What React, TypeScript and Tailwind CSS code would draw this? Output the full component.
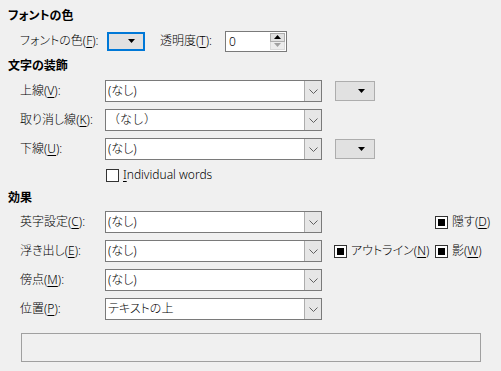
const font =
  "[font-family:'Noto_Sans','Noto_Sans_CJK_JP',sans-serif] [font-feature-settings:'palt']";

const Mn = ({ pre, k, post = "):" }: { pre: string; k: string; post?: string }) => (
  <span className="whitespace-nowrap">
    {pre}(<span className="underline underline-offset-2">{k}</span>
    {post}
  </span>
);

const Heading = ({ children, className = "" }: { children: string; className?: string }) => (
  <div className={`h-[16px] leading-[16px] font-bold ${className}`}>{children}</div>
);

const Chevron = () => (
  <svg width="9" height="5" viewBox="0 0 9 5" fill="none">
    <path d="M0.5 0.5 L4.5 4.5 L8.5 0.5" stroke="#606060" strokeWidth="1" />
  </svg>
);

const Arrow = ({ color = "#000" }: { color?: string }) => (
  <svg width="7" height="4" viewBox="0 0 7 4">
    <path d="M0 0 H7 L3.5 4 Z" fill={color} />
  </svg>
);

const Combo = ({ value, wide }: { value: string; wide?: boolean }) => (
  <div className="flex h-[22px] w-[217px] shrink-0 border border-[#7a7a7a] bg-white">
    <span
      className={`flex-1 truncate pl-[2px] leading-[20px] ${wide ? "[font-feature-settings:normal]" : ""}`}
    >
      {value}
    </span>
    <span className="flex w-[17px] items-center justify-center border-l border-[#adadad] bg-[#e6e6e6]">
      <Chevron />
    </span>
  </div>
);

const ColorBtn = () => (
  <div className="flex h-[20px] w-[40px] items-center justify-end border border-[#adadad] bg-[#e1e1e1] pr-[9px]">
    <Arrow />
  </div>
);

const Check = ({ checked }: { checked?: boolean }) => (
  <span className="flex h-[13px] w-[13px] shrink-0 items-center justify-center border border-[#333] bg-white">
    {checked ? <span className="h-[7px] w-[7px] bg-black" /> : null}
  </span>
);

const Row = ({ label, children }: { label: React.ReactNode; children: React.ReactNode }) => (
  <div className="flex h-[22px] items-center">
    <div className="w-[97px] shrink-0 pl-[12px]">{label}</div>
    {children}
  </div>
);

export default function App() {
  return (
    <div
      className={`h-[371px] w-[501px] overflow-hidden bg-[#f0f0f0] pl-[8px] pt-[8px] text-[12px] font-light text-black ${font}`}
    >
      <Heading>フォントの色</Heading>

      <div className="mt-[6px] flex h-[22px] items-center">
        <div className="w-[99px] shrink-0 pl-[12px]">
          <Mn pre="フォントの色" k="F" />
        </div>
        <div className="flex h-[19px] w-[38px] shrink-0 items-center justify-end border-2 border-[#0078d7] bg-[#e1e1e1] pr-[8px]">
          <Arrow />
        </div>
        <div className="w-[80px] shrink-0 pl-[15px]">
          <Mn pre="透明度" k="T" />
        </div>
        <div className="flex h-[21px] w-[62px] border border-[#7a7a7a] bg-white">
          <span className="flex-1 pl-[3px] leading-[19px]">0</span>
          <span className="my-[1px] mr-[1px] flex w-[15px] flex-col">
            <span className="flex flex-1 items-center justify-center border border-[#adadad] bg-[#e1e1e1]">
              <svg width="7" height="4" viewBox="0 0 7 4">
                <path d="M0 4 H7 L3.5 0 Z" fill="#000" />
              </svg>
            </span>
            <span className="flex flex-1 items-center justify-center border border-t-0 border-[#d9d9d9] bg-[#ececec]">
              <Arrow color="#a0a0a0" />
            </span>
          </span>
        </div>
      </div>

      <Heading className="mt-[6px]">文字の装飾</Heading>

      <div className="mt-[6px] flex flex-col gap-[7px]">
        <Row label={<Mn pre="上線" k="V" />}>
          <Combo value="(なし)" />
          <div className="ml-[13px]">
            <ColorBtn />
          </div>
        </Row>
        <Row label={<Mn pre="取り消し線" k="K" />}>
          <Combo value="（なし）" wide />
        </Row>
        <Row label={<Mn pre="下線" k="U" />}>
          <Combo value="(なし)" />
          <div className="ml-[13px]">
            <ColorBtn />
          </div>
        </Row>
      </div>

      <div className="mt-[7px] flex h-[16px] items-center pl-[98px]">
        <Check />
        <span className="ml-[4px]">
          <span className="underline underline-offset-2">I</span>ndividual words
        </span>
      </div>

      <Heading className="mt-[7px]">効果</Heading>

      <div className="mt-[5px] flex flex-col gap-[7px]">
        <Row label={<Mn pre="英字設定" k="C" />}>
          <Combo value="(なし)" />
          <div className="ml-[12px] w-[101px] shrink-0" />
          <div className="flex items-center gap-[4px]">
            <Check checked />
            <Mn pre="隠す" k="D" post=")" />
          </div>
        </Row>
        <Row label={<Mn pre="浮き出し" k="E" />}>
          <Combo value="(なし)" />
          <div className="ml-[12px] flex w-[101px] shrink-0 items-center gap-[4px]">
            <Check checked />
            <Mn pre="アウトライン" k="N" post=")" />
          </div>
          <div className="flex items-center gap-[4px]">
            <Check checked />
            <Mn pre="影" k="W" post=")" />
          </div>
        </Row>
        <Row label={<Mn pre="傍点" k="M" />}>
          <Combo value="(なし)" />
        </Row>
        <Row label={<Mn pre="位置" k="P" />}>
          <Combo value="テキストの上" />
        </Row>
      </div>

      <div className="ml-[13px] mt-[13px] h-[29px] w-[460px] border border-[#a0a0a0]" />
    </div>
  );
}
